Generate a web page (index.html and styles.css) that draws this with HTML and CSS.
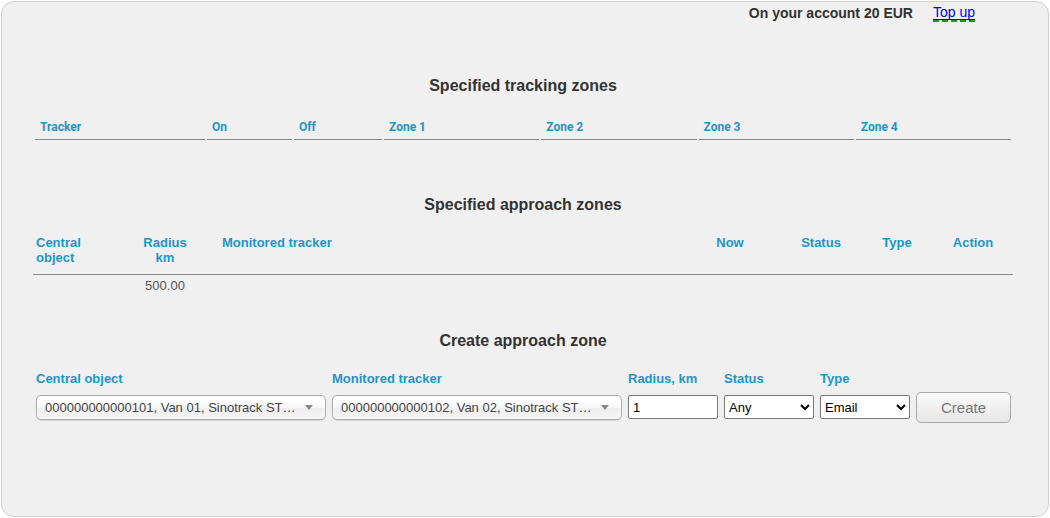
FILE: index.html
```html
<!DOCTYPE html>
<html lang="en">
<head>
  <meta charset="UTF-8">
  <title>Zones</title>
  <link rel="stylesheet" href="styles.css">
</head>
<body>
  <div class='page'>
    <div class='account'>
      <span class='balance'>On your account 20 EUR</span>
      <a href='#' class='topup'>Top up</a>
    </div>

    <h2 class='title title-first'>Specified tracking zones</h2>
    <table class='tracking'>
      <thead>
        <tr>
          <th class='c-tracker'>Tracker</th>
          <th class='c-on'>On</th>
          <th class='c-off'>Off</th>
          <th class='c-zone'>Zone 1</th>
          <th class='c-zone'>Zone 2</th>
          <th class='c-zone'>Zone 3</th>
          <th class='c-zone'>Zone 4</th>
        </tr>
      </thead>
    </table>

    <h2 class='title title-second'>Specified approach zones</h2>
    <table class='approach'>
      <thead>
        <tr>
          <th class='a-central'>Central<br>object</th>
          <th class='a-radius'>Radius<br>km</th>
          <th class='a-tracker'>Monitored tracker</th>
          <th class='a-now'>Now</th>
          <th class='a-status'>Status</th>
          <th class='a-type'>Type</th>
          <th class='a-action'>Action</th>
        </tr>
      </thead>
      <tbody>
        <tr>
          <td></td>
          <td class='a-radius'>500.00</td>
          <td></td><td></td><td></td><td></td><td></td>
        </tr>
      </tbody>
    </table>

    <h2 class='title title-third'>Create approach zone</h2>
    <div class='create-form'>
      <div class='field f-central'>
        <label>Central object</label>
        <div class='chosen'><span>000000000000101, Van 01, Sinotrack ST…</span><i class='arrow'></i></div>
      </div>
      <div class='field f-tracker'>
        <label>Monitored tracker</label>
        <div class='chosen'><span>000000000000102, Van 02, Sinotrack ST…</span><i class='arrow'></i></div>
      </div>
      <div class='field f-radius'>
        <label>Radius, km</label>
        <input type='text' value='1'>
      </div>
      <div class='field f-status'>
        <label>Status</label>
        <select><option>Any</option></select>
      </div>
      <div class='field f-type'>
        <label>Type</label>
        <select><option>Email</option></select>
      </div>
      <button class='create-btn'>Create</button>
    </div>
  </div>
</body>
</html>
```

FILE: styles.css
```css
body { margin: 0; background: #fff; font-family: "Liberation Sans", Arial, sans-serif; color: #333; }
.page { margin: 1px; height: 516px; box-sizing: border-box; border: 1px solid #cfcfcf; border-radius: 13px; background: #f0f0f0; padding: 0 35px 0 31px; }

.account { display: flex; justify-content: flex-end; gap: 20px; padding: 3px 38px 0 0; font-size: 14px; line-height: 16px; }
.balance { font-weight: bold; color: #333; }
.topup { color: #0000ee; text-decoration: none; border-bottom: 2px dashed #1a9a1a; box-shadow: inset 0 -1px 0 #0000ee; line-height: 15px; }

.title { margin: 0; text-align: center; font-size: 16px; font-weight: bold; color: #333; line-height: 20px; }
.title-first { margin-top: 54px; }
.title-second { margin-top: 55px; }
.title-third { margin-top: 33px; }

table { border-collapse: separate; width: 100%; }
th { color: #1d95c9; font-weight: bold; text-align: left; }

.tracking { border-spacing: 2px 0; margin-top: 22px; }
.tracking th { font-family: Roboto, "Liberation Sans", sans-serif; font-size: 12px; padding: 2px 5px 5px; border-bottom: 1px solid #888; }
.tracking .c-tracker { width: 160px; }
.tracking .c-on { width: 75px; }
.tracking .c-off { width: 78px; }

.approach { border-collapse: collapse; table-layout: fixed; width: 980px; margin-top: 17px; font-size: 13px; }
.approach th, .approach td { box-sizing: border-box; }
.approach th { line-height: 15px; padding: 3px 3px 9px; vertical-align: top; border-bottom: 1px solid #888; text-align: center; }
.approach td { color: #555; padding: 3px 3px 5px; line-height: 15px; }
.approach .a-central { width: 87px; text-align: left; }
.approach .a-radius { width: 90px; text-align: center; padding-left: 0; padding-right: 0; }
.approach .a-tracker { width: 469px; text-align: left; padding-left: 12px; }
.approach .a-now { width: 102px; }
.approach .a-status { width: 80px; }
.approach .a-type { width: 72px; }
.approach .a-action { width: 80px; }

.create-form { display: flex; align-items: flex-start; gap: 6px; margin-top: 20px; padding-left: 3px; }
.field { display: flex; flex-direction: column; gap: 9px; }
.field label { font-size: 13px; font-weight: bold; color: #1d95c9; line-height: 15px; }
.f-central, .f-tracker { width: 290px; }
.f-radius, .f-status, .f-type { width: 90px; }

.chosen { height: 25px; box-sizing: border-box; border: 1px solid #aaa; border-radius: 5px; background: linear-gradient(#fff 20%, #f6f6f6 50%, #eee 52%, #f4f4f4); box-shadow: 0 0 3px #fff inset, 0 1px 1px rgba(0,0,0,0.1); display: flex; align-items: center; justify-content: space-between; padding: 0 12px 0 8px; font-size: 13px; color: #444; }
.arrow { width: 0; height: 0; border-left: 4px solid transparent; border-right: 4px solid transparent; border-top: 5px solid #888; }

.field input { height: 24px; box-sizing: border-box; border: 1px solid #767676; border-radius: 2px; background: #fff; font: 13px "Liberation Sans", Arial, sans-serif; padding: 0 4px; width: 90px; }
.field select { height: 24px; box-sizing: border-box; font: 13px "Liberation Sans", Arial, sans-serif; width: 90px; background: #fff; border: 1px solid #767676; border-radius: 2px; color: #000; }

.create-btn { width: 95px; height: 31px; margin-top: 21px; border: 1px solid #aaa; border-radius: 5px; background: linear-gradient(#fafafa, #e6e6e6); color: #777; font: 15px "Liberation Sans", Arial, sans-serif; }
```
